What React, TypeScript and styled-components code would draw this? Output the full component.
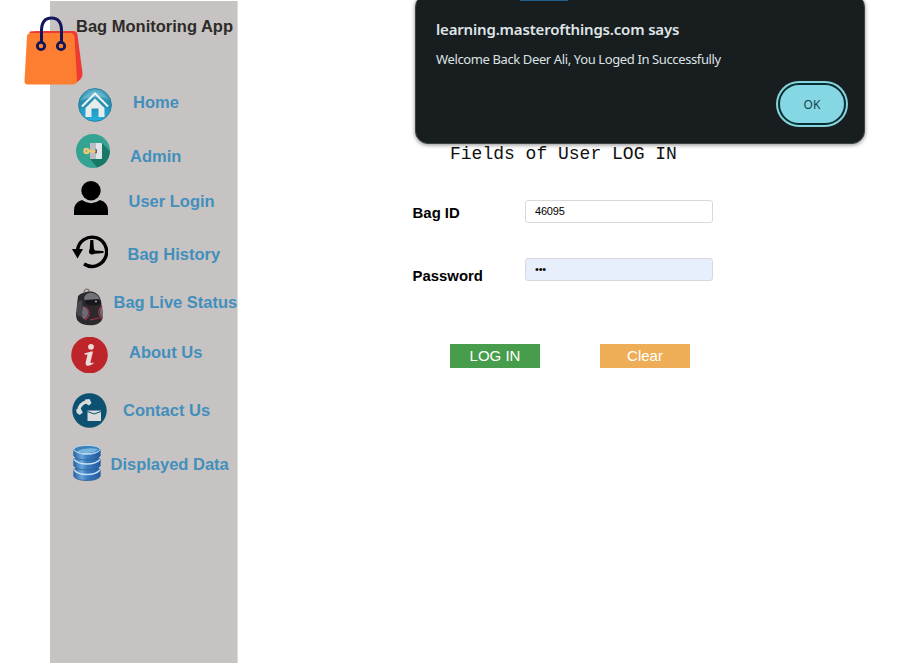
import React from "react";
import styled, { createGlobalStyle } from "styled-components";

const GlobalStyle = createGlobalStyle`
  * { box-sizing: border-box; }
  body { margin: 0; background: #fff; overflow: hidden; }
`;

const Page = styled.div`
  position: relative;
  display: flex;
  width: 915px;
  height: 663px;
  overflow: hidden;
  font-family: "Liberation Sans", Arial, sans-serif;
`;

const Sidebar = styled.aside`
  flex: none;
  width: 188px;
  height: 662px;
  margin: 1px 0 0 50px;
  background: #c7c3c2;
  border-right: 1px solid #dedcdb;
`;

const Brand = styled.header`
  display: flex;
  align-items: flex-start;
  width: 213px;
  height: 83px;
  margin-left: -27px;
`;

const BrandIcon = styled.svg`
  flex: none;
  width: 62px;
  height: 72px;
  margin-top: 13px;
`;

const BrandName = styled.h1`
  margin: 15px 0 0 -9px;
  font-size: 16.5px;
  line-height: 20px;
  font-weight: bold;
  color: #2d2b29;
  white-space: nowrap;
`;

const Nav = styled.nav`
  display: flex;
  flex-direction: column;
`;

const NavItem = styled.a<{ $height: number; $indent: number }>`
  display: flex;
  flex: none;
  align-items: flex-start;
  height: ${(p) => p.$height}px;
  padding-left: ${(p) => p.$indent}px;
  text-decoration: none;
  color: #428fbc;
`;

const NavIcon = styled.svg<{ $top: number }>`
  flex: none;
  margin-top: ${(p) => p.$top}px;
`;

const NavLabel = styled.span<{ $top: number; $gap: number }>`
  margin: ${(p) => p.$top}px 0 0 ${(p) => p.$gap}px;
  font-size: 16.5px;
  line-height: 20px;
  font-weight: bold;
  white-space: nowrap;
`;

const Main = styled.main`
  padding: 142px 0 0 174px;
`;

const FormTitle = styled.h2`
  margin: 0 0 0 38px;
  font: normal 18px/24px "Liberation Mono", "Courier New", monospace;
  color: #111;
  white-space: pre;
`;

const Field = styled.div<{ $gap: number; $labelTop: number }>`
  display: flex;
  align-items: flex-start;
  margin-top: ${(p) => p.$gap}px;
  height: 24px;
  label {
    width: 113px;
    padding-left: 0.6px;
    margin-top: ${(p) => p.$labelTop}px;
    font-size: 14.9px;
    line-height: 18px;
    font-weight: bold;
    color: #000;
  }
`;

const Input = styled.input<{ $filled?: boolean }>`
  width: 188px;
  height: 23px;
  padding: 0 9px 1px;
  border: 1px solid #d9d9dc;
  border-radius: 3px;
  outline: none;
  background: ${(p) => (p.$filled ? "#e8effc" : "#fff")};
  font: 11px/20px "Liberation Sans", Arial, sans-serif;
  letter-spacing: -0.2px;
  color: #000;
`;

const Actions = styled.div`
  display: flex;
  gap: 60px;
  margin: 62px 0 0 38px;
`;

const Button = styled.button<{ $color: string }>`
  width: 90px;
  height: 24px;
  padding: 0;
  border: 0;
  background: ${(p) => p.$color};
  color: #fff;
  font: 15px/24px "Liberation Sans", Arial, sans-serif;
`;

const Dialog = styled.section`
  position: absolute;
  top: -6px;
  left: 415px;
  width: 450px;
  height: 150px;
  padding: 24px 17px 0 20px;
  border: 1px solid #3d4244;
  border-radius: 13px;
  background: #181e20;
  box-shadow: 0 1px 4px rgba(0, 0, 0, 0.45);
  font-family: "Noto Sans", "Open Sans", sans-serif;
  display: flex;
  flex-direction: column;
`;

const DialogTitle = styled.strong`
  font-size: 15px;
  line-height: 20px;
  font-weight: 600;
  letter-spacing: -0.18px;
  color: #dfe5e6;
  white-space: nowrap;
`;

const DialogText = styled.p`
  margin: 10px 0 0;
  font-size: 13px;
  line-height: 20px;
  letter-spacing: -0.38px;
  color: #dce2e3;
  white-space: nowrap;
`;

const OkButton = styled.button`
  align-self: flex-end;
  width: 68px;
  height: 42px;
  margin: 14px 1px 0 0;
  padding: 1px 0 0;
  border: 2px solid #062e35;
  border-radius: 21px;
  outline: 2px solid #85d5df;
  background: #85d7e3;
  color: #15434b;
  font: 12px/36px "Noto Sans", sans-serif;
`;

const TabAccent = styled.div`
  position: absolute;
  top: 0;
  left: 520px;
  width: 48px;
  height: 1px;
  background: #1d5f8c;
`;

const home = (
  <>
    <defs>
      <linearGradient id="homeFill" x1="0" y1="0" x2="0" y2="1">
        <stop offset="0" stopColor="#56b0ca" />
        <stop offset=".45" stopColor="#258dac" />
        <stop offset="1" stopColor="#22b3e2" />
      </linearGradient>
    </defs>
    <circle cx="17" cy="17" r="16.4" fill="url(#homeFill)" stroke="#277f9b" />
    <path d="M3 12Q17-5 31 12Q25 8 17 9T3 12" fill="#8bc8d9" opacity=".5" />
    <path d="M4 18.500 17 5.500 30 18.500" fill="none" stroke="#ecf3f4" strokeWidth="2" />
    <path d="M7.500 20 17 10.500l9.500 9.500V29h-6v-8.500h-7V29h-6z" fill="#e8eced" />
  </>
);

const admin = (
  <>
    <circle cx="17" cy="17" r="17" fill="#34a392" />
    <path d="M14 25 26 9l8 8.500Q33 30 21 33.500z" fill="#197868" />
    <rect x="14" y="9" width="12" height="16" rx="1" fill="#e0e3e7" />
    <path d="M14 9h6v16h-6z" fill="#b9bcc2" />
    <rect x="19" y="15" width="2" height="4.500" rx="1" fill="#59616a" />
    <circle cx="10.500" cy="17" r="2" fill="none" stroke="#edc977" strokeWidth="2.400" />
    <path d="M13 17h6.500M15.500 17v2M18 17v2" fill="none" stroke="#edc977" strokeWidth="2" />
  </>
);

const user = (
  <>
    <circle cx="17" cy="9.700" r="9.700" />
    <path d="M0 34v-4.500Q0 21.500 8 19Q17 25.500 26 19Q34 21.500 34 29.500V34z" />
  </>
);

const history = (
  <>
    <path d="M5.500 15A14.600 14.600 0 1 1 12 29" fill="none" stroke="#000" strokeWidth="3.400" />
    <path d="M0 14h11L5.500 23.500z" />
    <circle cx="20" cy="16.500" r="3" />
    <path d="M18.300 5h3l.7 10.500 9.500.400v2.200L20 19l-2.500-2z" />
  </>
);

const backpack = (
  <>
    <path d="M8 4Q9-.5 13 2v3" fill="none" stroke="#777274" strokeWidth="1.300" />
    <path d="M2 8Q7 3 16 3.500q7 1.500 9 9l2 16q-1 7-9 8.500Q8 38 3 34 0 32 0 26z" fill="#2b292c" />
    <path d="M8 10q2-6 9-5 6 2 7 7-8 2-15 1z" fill="#73727b" />
    <path d="M1 14 6 12l1 18-6-3z" fill="#48464c" />
    <path d="m9 12 14-1 2 5q-8 3-15 0z" fill="#18171b" />
    <path d="M7 18q6 3 5 8-1 5-5 5l-1-6z" fill="#6d6a75" />
    <path d="M26 18q-3 4-2 8 1 3 3 4v-5z" fill="#6d6a75" />
    <path d="M9 19q5 3 4 8-1 3-4 5M26 18q-4 4-3 8 1 3 3 5M14 32l9-2" fill="none" stroke="#a23446" strokeWidth="1.200" />
    <circle cx="20" cy="13.500" r="1" fill="#aaa7ad" />
  </>
);

const info = (
  <>
    <circle cx="18.500" cy="18" r="18.300" fill="#bd252b" />
    <circle cx="20" cy="9.800" r="2.900" fill="#ecdada" />
    <path d="M13.500 16.200q3.500-.500 6.500-1.700h2L19.500 25q-.300 2 2.800.200l.4 1.100q-4.200 3.200-7 2.400-1.800-.800-1-3.400l1.800-7.600-3-.300z" fill="#ecdada" />
  </>
);

const contact = (
  <>
    <circle cx="17.500" cy="17.500" r="17.200" fill="#0c5171" />
    <path d="M6.500 18Q7.500 10.500 15 8.500" fill="none" stroke="#d8dbdc" strokeWidth="3.200" />
    <path d="m13 6.500 4.500-.500 2 4-2.500 2.500-4-2.500zM4 16.500l5-.5 1.800 3.500-3 2.500-3-2z" fill="#d8dbdc" />
    <path d="M15.500 17.500h13.500v10.500h-13.500z" fill="#d8dbdc" />
    <path d="m15.500 18.500 6.700 2.500 6.800-2.500" fill="none" stroke="#0c5171" />
  </>
);

const Disk = ({ y }: { y: number }) => (
  <g transform={`translate(0 ${y})`}>
    <path d="M.8 4v6.500q3 4 13.200 4t13.200-4V4q-1-3-13.200-3T.8 4" fill="url(#diskFill)" stroke="#29619a" strokeWidth=".8" />
    <path d="M1 4q4 4.500 13 4.500T27 4" fill="none" stroke="#c7e2f4" strokeWidth="1.300" />
  </g>
);

const database = (
  <>
    <defs>
      <linearGradient id="diskFill">
        <stop stopColor="#2b65a8" />
        <stop offset=".3" stopColor="#69a6d8" />
        <stop offset=".5" stopColor="#3b7dc0" />
        <stop offset="1" stopColor="#2459a0" />
      </linearGradient>
    </defs>
    <Disk y={21} />
    <Disk y={10.500} />
    <Disk y={0.500} />
    <ellipse cx="14" cy="4.500" rx="13.200" ry="4.100" fill="#3e80b8" stroke="#c0def1" strokeWidth=".9" />
    <path d="M4 6Q13 2 25 4q-1 3-11 4Q7 8 4 6" fill="#77b7dd" />
  </>
);

type Item = {
  label: string;
  art: React.ReactNode;
  height: number;
  indent: number;
  size: [number, number];
  iconTop: number;
  gap: number;
  labelTop: number;
};

const items: Item[] = [
  { label: "Home", art: home, height: 46, indent: 28, size: [34, 34], iconTop: 4, gap: 21, labelTop: 8 },
  { label: "Admin", art: admin, height: 46, indent: 26, size: [34, 34], iconTop: 4, gap: 20, labelTop: 16 },
  { label: "User Login", art: user, height: 52, indent: 24, size: [34, 34], iconTop: 5, gap: 20.5, labelTop: 15 },
  { label: "Bag History", art: history, height: 54, indent: 22, size: [36, 34], iconTop: 7, gap: 19.5, labelTop: 16 },
  { label: "Bag Live Status", art: backpack, height: 50, indent: 26, size: [28, 38], iconTop: 6, gap: 9.5, labelTop: 10 },
  { label: "About Us", art: info, height: 54, indent: 21, size: [37, 36], iconTop: 5, gap: 21, labelTop: 10 },
  { label: "Contact Us", art: contact, height: 54, indent: 22, size: [35, 35], iconTop: 7, gap: 16, labelTop: 14 },
  { label: "Displayed Data", art: database, height: 50, indent: 23, size: [28, 36], iconTop: 5, gap: 9.5, labelTop: 14 },
];

export default function App() {
  return (
    <Page>
      <GlobalStyle />
      <Sidebar>
        <Brand>
          <BrandIcon viewBox="0 0 62 72">
            <path d="M6 18Q8 17 14 17h36q4 0 4.500 4l5 38q1 6-8.500 11z" fill="#ef3a34" />
            <path d="M4 22q.500-3 4-3h39q4 0 4.500 4L54 66q0 4-4 4.500H5q-4 0-3.500-4z" fill="#fd7e31" />
            <path d="M18.500 29V17Q18.500 4 28.500 4T38.500 17v12" fill="none" stroke="#11175a" strokeWidth="3" />
            <g fill="#fd7e31" stroke="#11175a" strokeWidth="2.800">
              <circle cx="18" cy="32" r="3.700" />
              <circle cx="38" cy="32" r="3.700" />
            </g>
          </BrandIcon>
          <BrandName>Bag Monitoring App</BrandName>
        </Brand>
        <Nav>
          {items.map((it) => (
            <NavItem key={it.label} $height={it.height} $indent={it.indent}>
              <NavIcon
                $top={it.iconTop}
                width={it.size[0]}
                height={it.size[1]}
                viewBox={`0 0 ${it.size[0]} ${it.size[1]}`}
              >
                {it.art}
              </NavIcon>
              <NavLabel $top={it.labelTop} $gap={it.gap}>
                {it.label}
              </NavLabel>
            </NavItem>
          ))}
        </Nav>
      </Sidebar>
      <Main>
        <FormTitle>Fields of User LOG IN</FormTitle>
        <Field $gap={34} $labelTop={4}>
          <label htmlFor="bag">Bag ID</label>
          <Input id="bag" defaultValue="46095" />
        </Field>
        <Field $gap={34} $labelTop={9}>
          <label htmlFor="pass">Password</label>
          <Input id="pass" type="password" defaultValue="123" $filled />
        </Field>
        <Actions>
          <Button $color="#479d4c">LOG IN</Button>
          <Button $color="#eeae57">Clear</Button>
        </Actions>
      </Main>
      <Dialog role="alertdialog">
        <DialogTitle>learning.masterofthings.com says</DialogTitle>
        <DialogText>Welcome Back Deer Ali, You Loged In Successfully</DialogText>
        <OkButton>OK</OkButton>
      </Dialog>
      <TabAccent />
    </Page>
  );
}
